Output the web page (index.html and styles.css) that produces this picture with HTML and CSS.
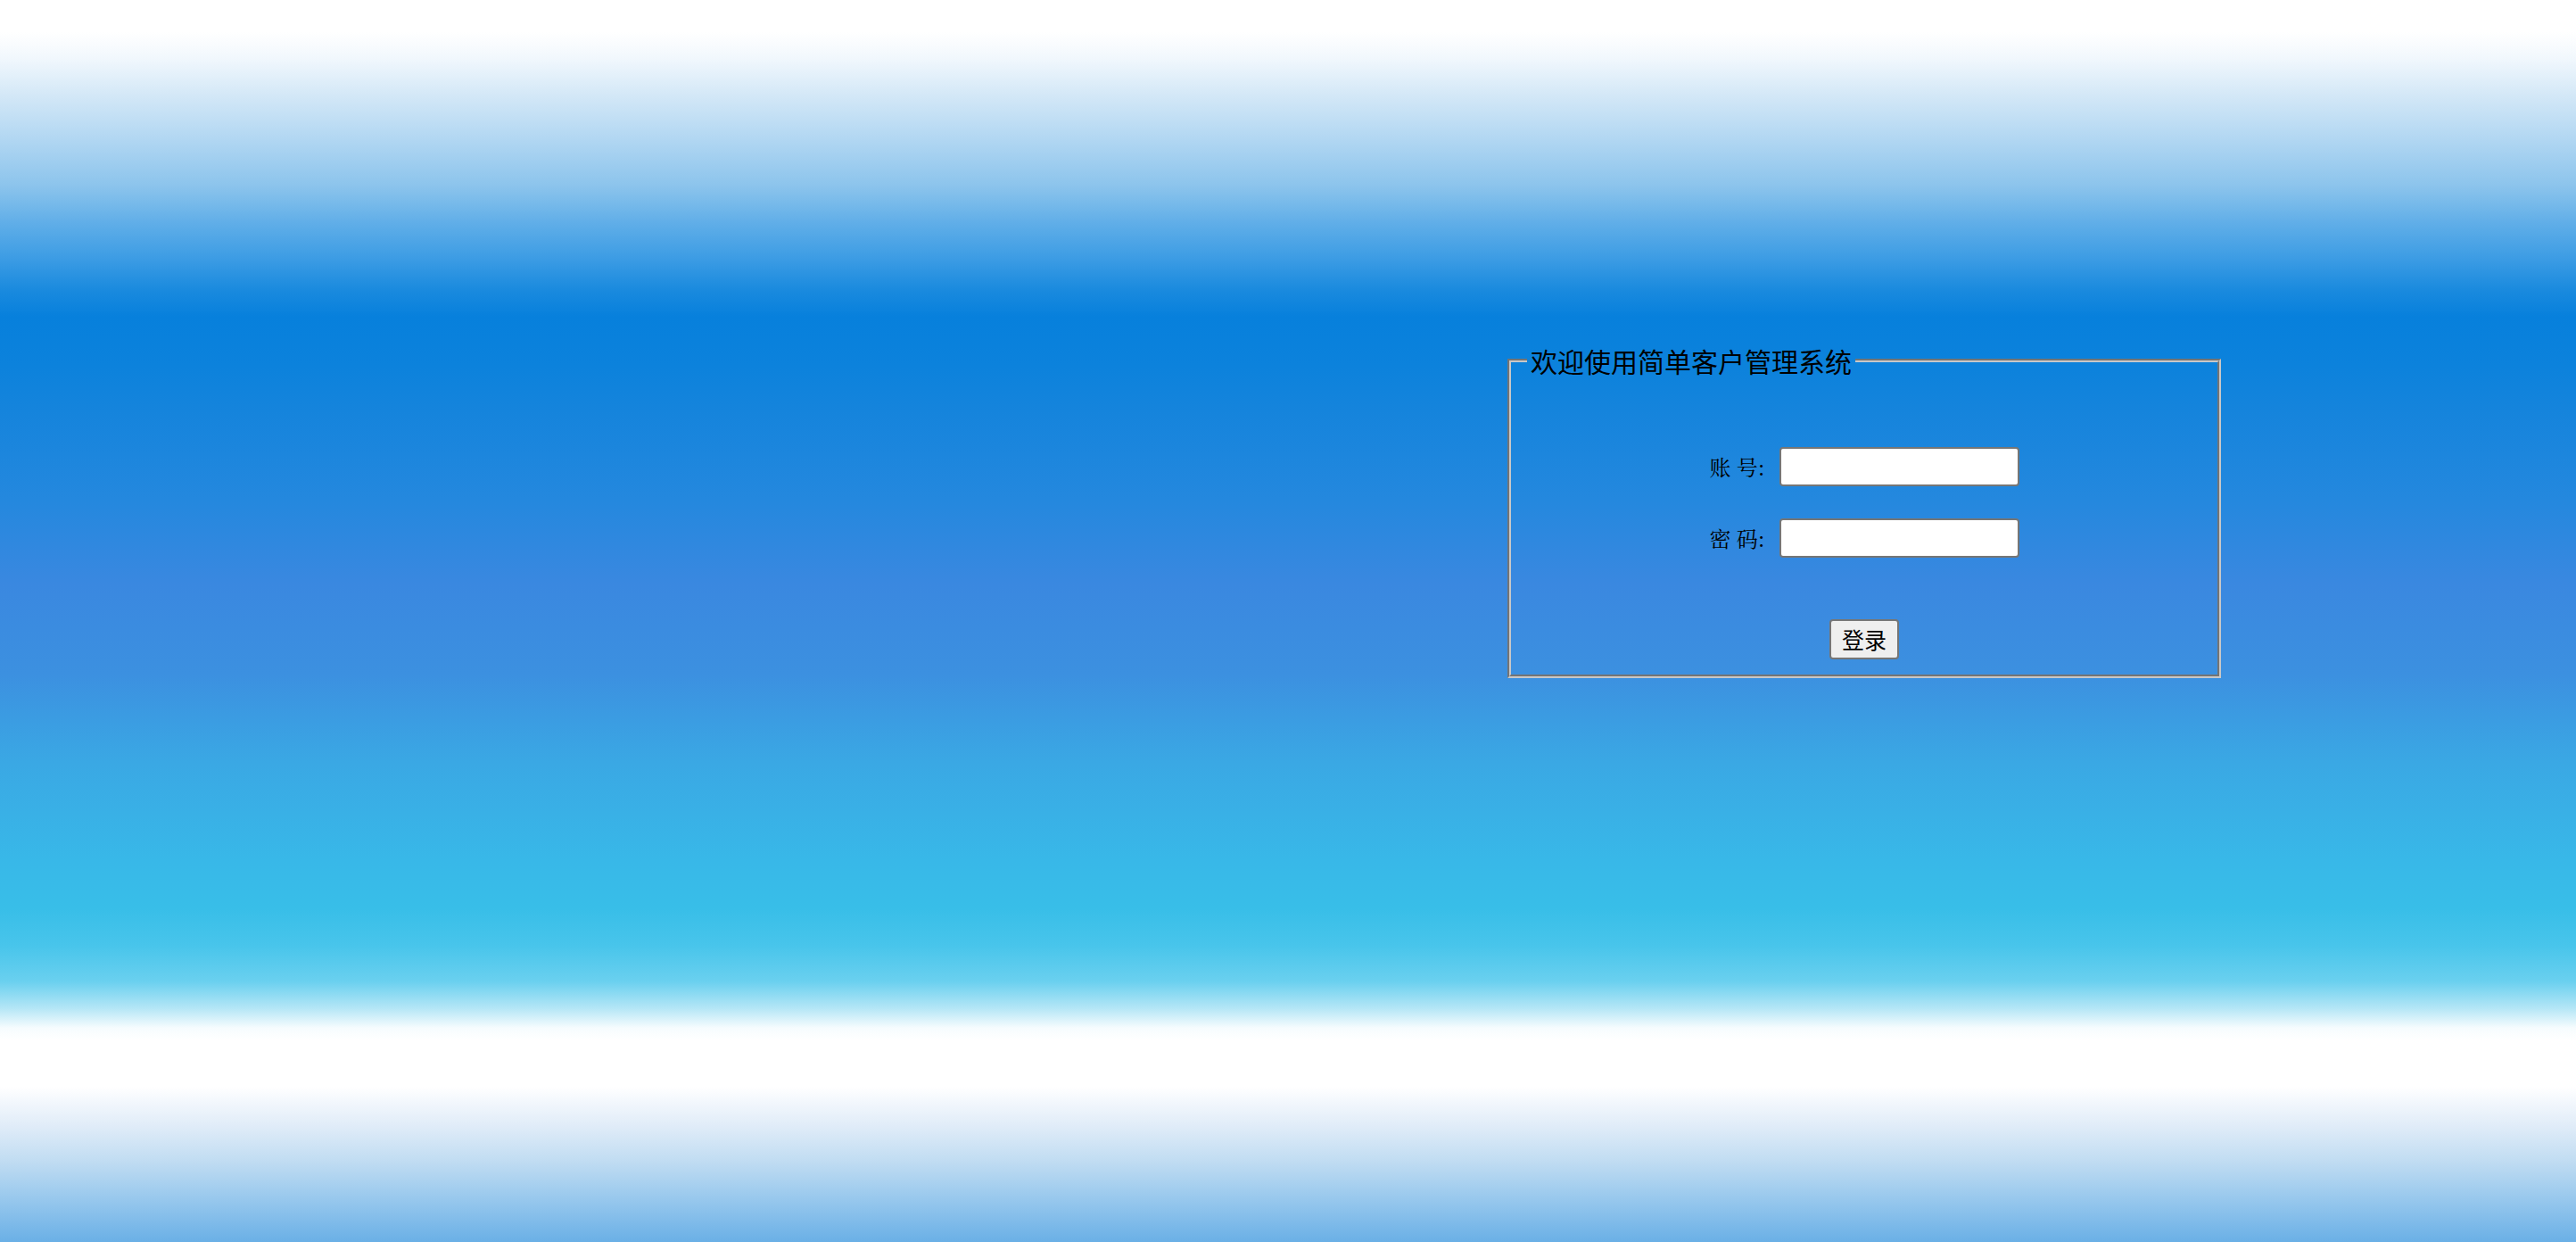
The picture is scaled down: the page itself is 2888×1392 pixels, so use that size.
FILE: index.html
```html
<!DOCTYPE html>
<html lang="zh-CN">
<head>
<meta charset="utf-8">
<title>简单客户管理系统</title>
<link rel="stylesheet" href="styles.css">
</head>
<body>
<div class="page">
  <fieldset class="login">
    <legend class="login-title">欢迎使用简单客户管理系统</legend>
    <form class="login-form" action="#" onsubmit="return false;">
      <div class="fields">
        <label class="field-label" for="account">账 号:</label>
        <input class="field-input" id="account" type="text">
        <label class="field-label" for="password">密 码:</label>
        <input class="field-input" id="password" type="password">
      </div>
      <div class="actions">
        <button class="submit" type="submit">登录</button>
      </div>
    </form>
  </fieldset>
</div>
</body>
</html>
```
FILE: styles.css
```css
html {
  height: 100%;
  background-color: #ffffff;
  background-image: linear-gradient(
    to bottom,
    #ffffff 0px,
    #ffffff 36px,
    #f2f8fd 64px,
    #d4e8f7 106px,
    #b0d6f2 158px,
    #8cc4ec 208px,
    #60aee8 250px,
    #3c9ce4 290px,
    #1a8ade 325px,
    #0780dc 355px,
    #0c82dc 410px,
    #1584dc 460px,
    #2488de 560px,
    #3a88e0 655px,
    #3c90e0 755px,
    #3aa8e4 855px,
    #38b8e8 965px,
    #38bee8 1018px,
    #48c5eb 1060px,
    #6ad0ef 1100px,
    #b4e6f6 1130px,
    #f6fcfe 1152px,
    #ffffff 1166px,
    #ffffff 1218px,
    #f4f8fd 1233px,
    #e0ecf8 1262px,
    #c0dcf2 1302px,
    #90c4ec 1352px,
    #6ab0e6 1392px
  );
  background-repeat: no-repeat;
  background-size: 100% 1392px;
}

body {
  margin: 0;
  font-family: "Liberation Serif", serif;
}

.page {
  padding-top: 386px;
}

.login {
  box-sizing: border-box;
  width: 800px;
  margin: 0 0 0 1690px;
  border: 4px groove #c8c8c8;
  padding: 0 18px 17px;
  min-inline-size: 0;
}

.login-title {
  padding: 0 4px;
  font-family: "Noto Sans CJK SC", "Noto Sans", sans-serif;
  font-size: 30px;
  line-height: 36px;
  color: #000;
}

.login-form {
  margin: 0;
}

.fields {
  display: grid;
  grid-template-columns: auto auto;
  justify-content: center;
  align-items: center;
  column-gap: 16px;
  row-gap: 36px;
  padding-top: 79px;
}

.field-label {
  font-family: "Noto Serif CJK SC", "AR PL UMing CN", "Liberation Serif", serif;
  font-size: 24px;
  line-height: 30px;
  color: #000;
}

.field-input {
  box-sizing: border-box;
  width: 269px;
  height: 44px;
  margin: 0;
  padding: 0 4px;
  border: 2px solid #767676;
  border-radius: 4px;
  background: #ffffff;
  font-size: 24px;
}

.actions {
  display: flex;
  justify-content: center;
  margin-top: 69px;
}

.submit {
  box-sizing: border-box;
  width: 78px;
  height: 45px;
  margin: 0;
  padding: 0;
  border: 2px solid #767676;
  border-radius: 4px;
  background: #efefef;
  color: #000;
  font-family: "Noto Sans CJK SC", "Noto Sans", sans-serif;
  font-size: 25px;
  line-height: 1;
}
```
